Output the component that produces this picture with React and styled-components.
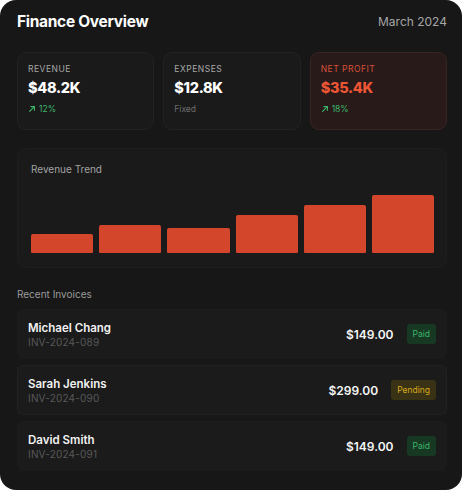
import React from 'react';
import styled, { createGlobalStyle } from 'styled-components';

const GlobalStyle = createGlobalStyle`
  body {
    margin: 0;
    background: #ffffff;
    font-family: Inter, "Liberation Sans", sans-serif;
  }
`

const stats = [
  { label: 'Revenue', value: '$48.2K', note: '12%', trend: true },
  { label: 'Expenses', value: '$12.8K', note: 'Fixed' },
  { label: 'Net Profit', value: '$35.4K', note: '18%', trend: true, accent: true },
]

const bars = [19, 28, 25, 38, 48, 58]

const invoices = [
  { name: 'Michael Chang', id: 'INV-2024-089', amount: '$149.00', status: 'Paid' },
  { name: 'Sarah Jenkins', id: 'INV-2024-090', amount: '$299.00', status: 'Pending' },
  { name: 'David Smith', id: 'INV-2024-091', amount: '$149.00', status: 'Paid' },
]

function Arrow() {
  return (
    <svg width="8" height="8" viewBox="0 0 10 10" fill="none" stroke="currentColor" strokeWidth="1.4" strokeLinecap="round" strokeLinejoin="round">
      <path d="M2 8 L8 2" />
      <path d="M3.5 2 H8 V6.5" />
    </svg>
  )
}

function App() {
  return (
    <>
      <GlobalStyle />
      <Panel>
        <Header>
          <Title>Finance Overview</Title>
          <Period>March 2024</Period>
        </Header>

        <StatGrid>
          {stats.map(s => (
            <StatCard key={s.label} $accent={s.accent}>
              <StatLabel $accent={s.accent}>{s.label}</StatLabel>
              <StatValue $accent={s.accent}>{s.value}</StatValue>
              <StatNote $trend={s.trend}>
                {s.trend && <Arrow />}
                {s.note}
              </StatNote>
            </StatCard>
          ))}
        </StatGrid>

        <ChartCard>
          <ChartTitle>Revenue Trend</ChartTitle>
          <Bars>
            {bars.map((h, i) => (
              <Bar key={i} style={{ height: `${h}px` }} />
            ))}
          </Bars>
        </ChartCard>

        <SectionTitle>Recent Invoices</SectionTitle>
        <InvoiceList>
          {invoices.map(inv => (
            <InvoiceRow key={inv.id} $outlined={inv.status === 'Pending'}>
              <Who>
                <Name>{inv.name}</Name>
                <InvId>{inv.id}</InvId>
              </Who>
              <Amount>{inv.amount}</Amount>
              <Badge $pending={inv.status === 'Pending'}>{inv.status}</Badge>
            </InvoiceRow>
          ))}
        </InvoiceList>
      </Panel>
    </>
  )
}

export default App;

const Panel = styled.div`
  width: 462px;
  height: 490px;
  box-sizing: border-box;
  background: #171717;
  border-radius: 16px;
  padding: 11px 15px 0 17px;
  overflow: hidden;
`
const Header = styled.div`
  display: flex;
  justify-content: space-between;
  align-items: center;
  height: 21px;
`
const Title = styled.h1`
  margin: 0;
  font-size: 15.5px;
  font-weight: 700;
  color: #ffffff;
  letter-spacing: -0.3px;
`
const Period = styled.span`
  font-size: 12px;
  color: #a6a6a6;
`
const StatGrid = styled.div`
  display: grid;
  grid-template-columns: repeat(3, 1fr);
  gap: 9px;
  margin-top: 20px;
`
const StatCard = styled.div`
  height: 78px;
  box-sizing: border-box;
  border-radius: 9px;
  padding: 11px 10px;
  background: ${p => p.$accent ? '#271a19' : '#1a1a1a'};
  border: 1px solid ${p => p.$accent ? '#3a2422' : '#222222'};
`
const StatLabel = styled.div`
  font-size: 8.5px;
  letter-spacing: 0.5px;
  text-transform: uppercase;
  color: ${p => p.$accent ? '#d9513a' : '#a8a8a8'};
`
const StatValue = styled.div`
  margin-top: 5px;
  font-size: 14.5px;
  font-weight: 800;
  letter-spacing: -0.3px;
  color: ${p => p.$accent ? '#ee5535' : '#ffffff'};
`
const StatNote = styled.div`
  margin-top: 8px;
  display: flex;
  align-items: center;
  gap: 3px;
  font-size: 8.5px;
  color: ${p => p.$trend ? '#3cb56a' : '#6e6e6e'};
`
const ChartCard = styled.div`
  margin-top: 18px;
  height: 120px;
  box-sizing: border-box;
  border-radius: 9px;
  background: #1a1a1a;
  border: 1px solid #1e1e1e;
  padding: 14px 12px 14px 13px;
  display: flex;
  flex-direction: column;
`
const ChartTitle = styled.div`
  font-size: 10px;
  color: #a3a3a3;
`
const Bars = styled.div`
  flex: 1;
  display: flex;
  align-items: flex-end;
  gap: 6px;
`
const Bar = styled.div`
  flex: 1;
  background: #d4462b;
  border-radius: 2px 2px 1px 1px;
`
const SectionTitle = styled.div`
  margin-top: 20px;
  font-size: 10px;
  color: #9a9a9a;
`
const InvoiceList = styled.div`
  display: flex;
  flex-direction: column;
  gap: 6px;
  margin-top: 9px;
`
const InvoiceRow = styled.div`
  height: 50px;
  box-sizing: border-box;
  display: flex;
  align-items: center;
  padding: 0 10px 0 10px;
  border-radius: 6px;
  background: #1b1b1b;
  border: 1px solid ${p => p.$outlined ? '#222222' : '#1c1c1c'};
`
const Who = styled.div`
  flex: 1;
  display: flex;
  flex-direction: column;
  gap: 1px;
`
const Name = styled.div`
  font-size: 11.5px;
  font-weight: 600;
  color: #f2f2f2;
`
const InvId = styled.div`
  font-size: 10px;
  color: #585858;
  letter-spacing: 0.2px;
`
const Amount = styled.div`
  font-size: 12px;
  font-weight: 600;
  color: #f5f5f5;
  margin-right: 13px;
`
const Badge = styled.span`
  font-size: 8.5px;
  padding: 5px 6px;
  border-radius: 3px;
  background: ${p => p.$pending ? '#3a3214' : '#173823'};
  color: ${p => p.$pending ? '#d6ab1e' : '#3cb56a'};
`
